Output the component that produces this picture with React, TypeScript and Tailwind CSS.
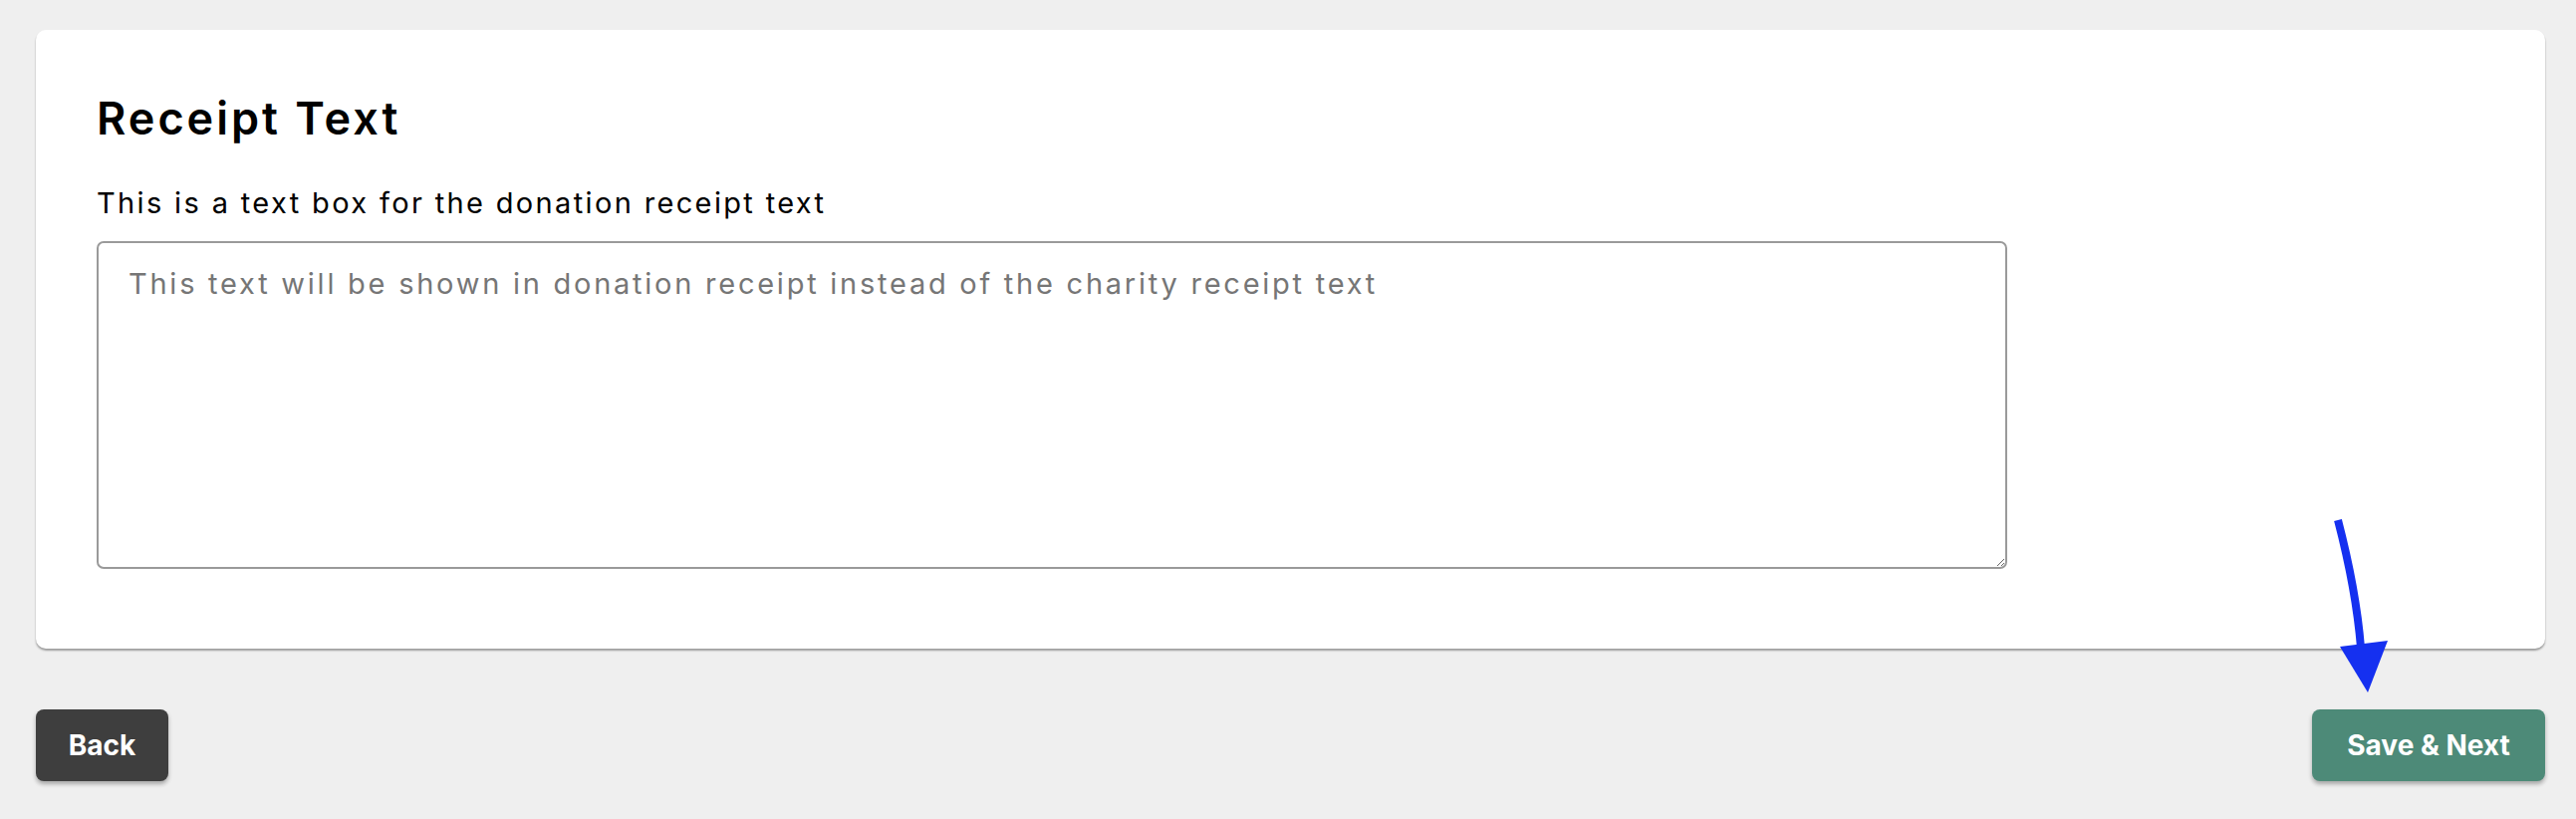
export default function App() {
  return (
    <div className="min-h-[822px] w-full bg-[#efefef] pl-[36px] pr-[31px] pt-[30px] font-['Inter',sans-serif]">
      <div className="h-[621px] rounded-[10px] bg-white px-[61px] pt-[66px] shadow-[0_2px_2px_rgba(0,0,0,0.35)]">
        <h1 className="text-[45px] leading-none font-semibold tracking-[3px] text-black">Receipt Text</h1>
        <label className="mt-[48px] block text-[29px] leading-none tracking-[2.35px] text-black">
          This is a text box for the donation receipt text
        </label>
        <textarea
          placeholder="This text will be shown in donation receipt instead of the charity receipt text"
          className="mt-[24px] block h-[329px] w-[80%] rounded-[7px] border-2 border-[#9a9a9a] px-[30px] pt-[26px] pb-[22px] text-[29px] leading-none tracking-[2.75px] text-black placeholder:text-[#767676] focus:outline-none"
        />
      </div>
      <div className="mt-[61px] flex items-center justify-between">
        <button
          type="button"
          className="h-[72px] w-[133px] rounded-[8px] bg-[#3e3e3e] text-[28px] font-bold text-white shadow-[0_3px_4px_rgba(0,0,0,0.3)]"
        >
          Back
        </button>
        <div className="relative">
          <svg
            className="absolute bottom-[86px] left-[12px]"
            width="80"
            height="180"
            viewBox="0 0 80 180"
          >
            <path d="M14 4 C 26 50, 34 95, 37 132" fill="none" stroke="#1530f0" strokeWidth="8" />
            <polygon points="16,131 64,125 44,177" fill="#1530f0" />
          </svg>
          <button
            type="button"
            className="h-[72px] w-[234px] rounded-[8px] bg-[#4d8a78] text-[28px] font-bold text-white shadow-[0_3px_4px_rgba(0,0,0,0.3)]"
          >
            Save &amp; Next
          </button>
        </div>
      </div>
    </div>
  );
}
